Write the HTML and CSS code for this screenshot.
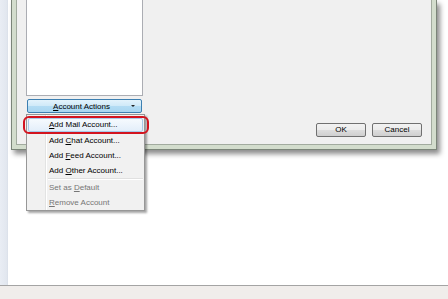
FILE: index.html
```html
<!DOCTYPE html>
<html lang="en">
<head>
<meta charset="UTF-8">
<title>Account Settings</title>
<link rel="stylesheet" href="styles.css">
</head>
<body>
    <div class="screen">
        <div class="main">
            <div class="sidebar"></div>
            <div class="canvas">
                <div class="dialog">
                    <div class="dialog-body">
                        <div class="accounts">
                            <div class="account-list"></div>
                            <div class="actions-btn">
                                <span class="actions-label"><u>A</u>ccount Actions</span>
                                <span class="arrow"></span>
                            </div>
                        </div>
                        <div class="dialog-buttons">
                            <div class="btn">OK</div>
                            <div class="btn">Cancel</div>
                        </div>
                    </div>
                </div>
            </div>
        </div>
        <div class="statusbar"></div>
    </div>

    <div class="menu">
        <div class="menu-item hover"><u>A</u>dd Mail Account...</div>
        <div class="menu-item">Add <u>C</u>hat Account...</div>
        <div class="menu-item">Add <u>F</u>eed Account...</div>
        <div class="menu-item">Add <u>O</u>ther Account...</div>
        <div class="menu-sep"></div>
        <div class="menu-item disabled">Set as <u>D</u>efault</div>
        <div class="menu-item disabled"><u>R</u>emove Account</div>
    </div>

    <!-- red annotation ring around the first menu entry -->
    <div class="callout"></div>
</body>
</html>
```

FILE: styles.css
```css
body {
    margin: 0;
    font-family: "Liberation Sans", Arial, sans-serif;
    font-size: 8px;
    color: #000;
    background-color: #fff;
}
u {
    text-decoration: underline;
    text-underline-offset: 1px;
}
.screen {
    width: 448px;
    height: 299px;
    display: flex;
    flex-direction: column;
    overflow: hidden;
}
.main {
    height: 285px;
    display: flex;
}
.sidebar {
    width: 8px;
    background: linear-gradient(to right, #e9edf4, #e2e7ef 80%, #d9dfe8);
}
.canvas {
    flex: 1;
    background-color: #fff;
    padding-left: 3px;
}
.statusbar {
    flex: 1;
    background-color: #f0edeb;
    border-top: 1px solid #a4a4a4;
}

/* dialog window, top part is off screen */
.dialog {
    width: 416px;
    padding: 0 4px 4px 4px;
    background-color: #d3ddcd;
    border: 1px solid #7b8579;
    border-top: none;
    box-shadow: 3px 4px 5px rgba(0, 0, 0, 0.45);
}
.dialog-body {
    height: 144px;
    display: flex;
    justify-content: space-between;
    padding: 0 9px 0 9px;
    background-color: #f0f0f0;
    border: 1px solid #a2ab9f;
    border-top: none;
}
.accounts {
    width: 117px;
    display: flex;
    flex-direction: column;
    padding-bottom: 31px;
}
.account-list {
    flex: 1;
    background-color: #fff;
    border: 1px solid #abadb3;
    border-top: none;
}
.actions-btn {
    height: 12px;
    margin: 3px 1px 0 1px;
    display: flex;
    align-items: center;
    position: relative;
    justify-content: center;
    border: 1px solid #3c7fb1;
    border-radius: 2px;
    background: linear-gradient(#e3f3fc, #cfe9f8 50%, #b3dcf4 51%, #a9d6f1);
}
.actions-label {
    margin-left: -6px;
}
.arrow {
    position: absolute;
    right: 6px;
    top: 5px;
    border-left: 2px solid transparent;
    border-right: 2px solid transparent;
    border-top: 2px solid #222;
}
.dialog-buttons {
    display: flex;
    gap: 6px;
    align-self: flex-end;
    margin-bottom: 7px;
}
.btn {
    width: 48px;
    height: 12px;
    line-height: 12px;
    text-align: center;
    border: 1px solid #707070;
    border-radius: 2px;
    background: linear-gradient(#f2f2f2, #ebebeb 50%, #dddddd 51%, #cfcfcf);
}

/* popup menu */
.menu {
    position: absolute;
    left: 26px;
    top: 114px;
    width: 117px;
    padding: 2px 0 0 0;
    border: 1px solid #979797;
    background: linear-gradient(to right, #f1f1f1 18px, #e2e3e3 18px, #e2e3e3 19px, #fff 19px, #fff 20px, #f1f1f1 20px);
    box-shadow: 2px 2px 2px rgba(0, 0, 0, 0.35);
}
.menu-item {
    height: 15px;
    line-height: 15px;
    padding-left: 22px;
    white-space: nowrap;
}
.menu-item.hover {
    height: 12px;
    line-height: 12px;
    margin: 1px 1px 1px 1px;
    padding-left: 20px;
    border: 1px solid #a8cbea;
    border-radius: 2px;
    background: linear-gradient(#f6fafe, #e3eefa);
}
.menu-item.disabled {
    color: #767676;
}
.menu-sep {
    height: 1px;
    margin: 0 1px 0 21px;
    border-top: 1px solid #e0e0e0;
    background-color: #fff;
}

.callout {
    position: absolute;
    left: 23px;
    top: 116px;
    width: 122px;
    height: 14px;
    border: 2px solid #d3141f;
    border-radius: 6px;
}
```
